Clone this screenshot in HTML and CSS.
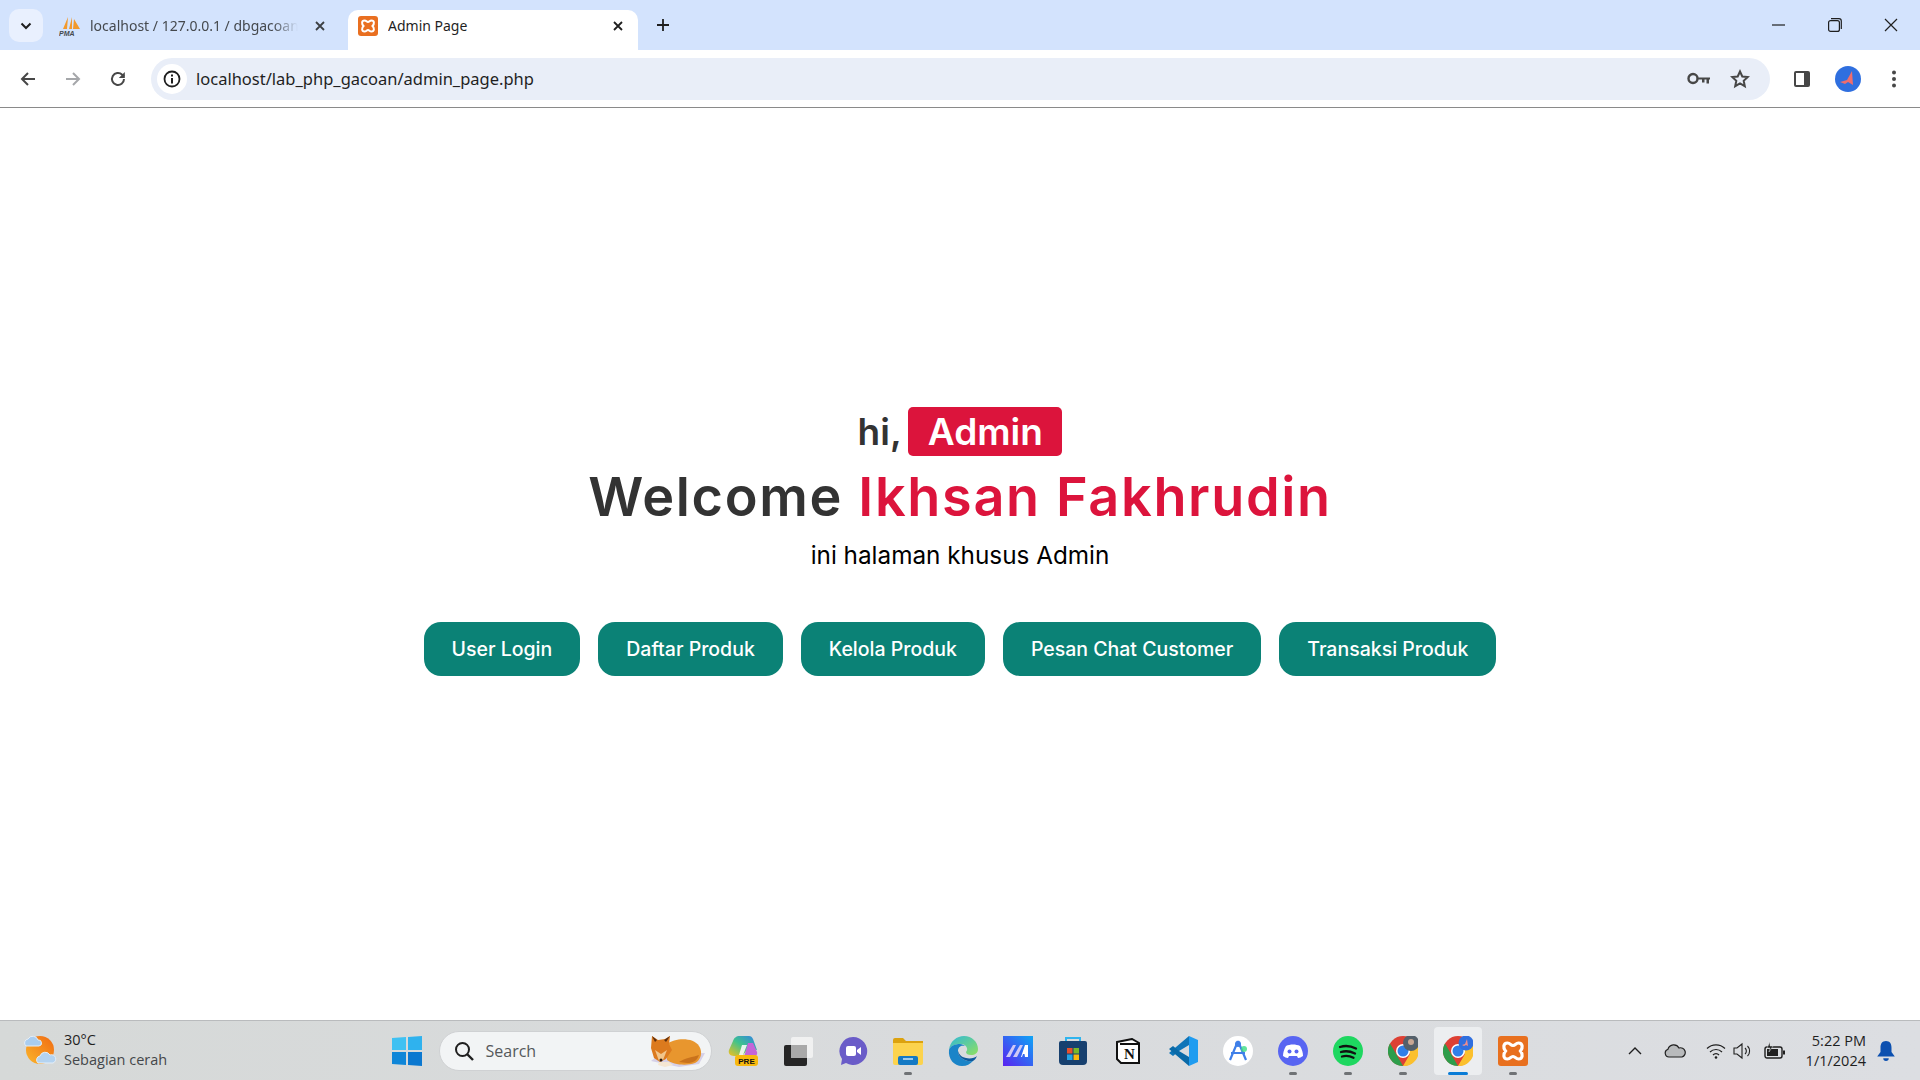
FILE: index.html
```html
<!DOCTYPE html>
<html lang="en">
<head>
    <meta charset="UTF-8">
    <title>Admin Page</title>
    <link rel="stylesheet" href="styles.css">
</head>
<body>

    <div class="tabstrip">
        <div class="tab-search"><svg width="12" height="8" viewBox="0 0 12 8"><path d="M1.500 1.500 6 6l4.500-4.500" fill="none" stroke="#1f1f1f" stroke-width="2"/></svg></div>
        <div class="tab">
            <svg class="favicon" width="22" height="20" viewBox="0 0 22 20"><path d="M9 1 4 13h4zM13 1l-3 12h3zM15 3l-1 10h7z" fill="#f29a2e"/><text x="0" y="19.500" class="pma">PMA</text></svg>
            <span class="tab-title">localhost / 127.0.0.1 / dbgacoan</span>
            <svg class="tab-close" width="12" height="12" viewBox="0 0 12 12"><path d="M2 2l8 8M10 2l-8 8" stroke="#3c4043" stroke-width="1.800"/></svg>
        </div>
        <div class="tab active">
            <svg class="favicon" width="20" height="20" viewBox="0 0 20 20"><rect width="20" height="20" rx="3" fill="#e96f20"/><path d="M6.500 4.500c2 0 2 1.500 3.500 1.500s1.500-1.500 3.500-1.500c3 0 3 3.500 1 5.500 2 2 2 5.500-1 5.500-2 0-2-1.500-3.500-1.500S8.500 15.500 6.500 15.500c-3 0-3-3.500-1-5.500-2-2-2-5.500 1-5.500z" fill="none" stroke="#fff" stroke-width="2"/></svg>
            <span class="tab-title">Admin Page</span>
            <svg class="tab-close" width="12" height="12" viewBox="0 0 12 12"><path d="M2 2l8 8M10 2l-8 8" stroke="#1f1f1f" stroke-width="1.800"/></svg>
        </div>
        <svg class="new-tab" width="14" height="14" viewBox="0 0 14 14"><path d="M7 1v12M1 7h12" stroke="#1f1f1f" stroke-width="1.800"/></svg>
        <div class="window-controls">
            <svg width="14" height="14" viewBox="0 0 14 14"><path d="M0 7h13" stroke="#1f1f1f" stroke-width="1.200"/></svg>
            <svg width="14" height="14" viewBox="0 0 14 14"><rect x=".6" y="2.600" width="10.800" height="10.800" rx="2" fill="none" stroke="#1f1f1f" stroke-width="1.200"/><path d="M3 .7h8a2.300 2.300 0 0 1 2.300 2.300v8" fill="none" stroke="#1f1f1f" stroke-width="1.200"/></svg>
            <svg width="14" height="14" viewBox="0 0 14 14"><path d="M1 1l12 12M13 1 1 13" stroke="#1f1f1f" stroke-width="1.200"/></svg>
        </div>
    </div>

    <div class="toolbar">
        <svg class="nav" width="18" height="18" viewBox="0 0 18 18"><path d="M16 9H3M9 3 3 9l6 6" fill="none" stroke="#474747" stroke-width="2"/></svg>
        <svg class="nav" width="18" height="18" viewBox="0 0 18 18"><path d="M2 9h13M9 3l6 6-6 6" fill="none" stroke="#a5a7aa" stroke-width="2"/></svg>
        <svg class="nav" width="18" height="18" viewBox="0 0 18 18"><path d="M15 9a6 6 0 1 1-1.800-4.300L15 6.500" fill="none" stroke="#474747" stroke-width="2"/><path d="M15.800 2v6h-6z" fill="#474747"/></svg>
        <div class="omnibox">
            <span class="site-info"><svg width="18" height="18" viewBox="0 0 18 18"><circle cx="9" cy="9" r="7.500" fill="none" stroke="#1f1f1f" stroke-width="1.800"/><path d="M9 8v5.500M9 4.500v2" stroke="#1f1f1f" stroke-width="2"/></svg></span>
            <span class="url">localhost/lab_php_gacoan/admin_page.php</span>
            <svg class="omni-icon" width="24" height="14" viewBox="0 0 24 14"><circle cx="6" cy="6.500" r="4.500" fill="none" stroke="#474747" stroke-width="2.400"/><path d="M11 5.500h12v2h-1v4h-2.500v-4h-2v3H15v-3h-4z" fill="#474747"/></svg>
            <svg class="omni-icon" width="20" height="20" viewBox="0 0 20 20"><path d="M10 2.500l2.300 5 5.400.6-4 3.700 1.100 5.400L10 14.500l-4.800 2.700 1.100-5.400-4-3.700 5.400-.6z" fill="none" stroke="#474747" stroke-width="2"/></svg>
        </div>
        <svg class="tool-panel" width="18" height="18" viewBox="0 0 18 18"><rect x="1" y="1" width="16" height="16" rx="2" fill="#474747"/><rect x="3" y="3" width="8" height="12" fill="#fff"/></svg>
        <svg class="avatar" width="26" height="26" viewBox="0 0 26 26"><circle cx="13" cy="13" r="13" fill="#2f6fdf"/><path d="M5 16l7-2 5-9 1 14-5-3-3 2z" fill="#ef6d6d"/></svg>
        <svg class="menu" width="4" height="18" viewBox="0 0 4 18"><circle cx="2" cy="2.500" r="2" fill="#474747"/><circle cx="2" cy="9" r="2" fill="#474747"/><circle cx="2" cy="15.500" r="2" fill="#474747"/></svg>
    </div>

    <div class="page">
        <h3 class="hi">hi, <span class="badge">Admin</span></h3>
        <h1 class="welcome">Welcome <span class="red">Ikhsan Fakhrudin</span></h1>
        <p class="desc">ini halaman khusus Admin</p>
        <div class="links">
            <a class="btn" href="#">User Login</a>
            <a class="btn" href="#">Daftar Produk</a>
            <a class="btn" href="#">Kelola Produk</a>
            <a class="btn" href="#">Pesan Chat Customer</a>
            <a class="btn" href="#">Transaksi Produk</a>
        </div>
    </div>

    <div class="taskbar">
        <div class="weather">
            <svg width="34" height="34" viewBox="0 0 34 34"><defs><linearGradient id="sunGrad" x1="1" y1="0" x2="0" y2="1"><stop offset="0" stop-color="#f06a12"/><stop offset="1" stop-color="#fbb62c"/></linearGradient></defs><circle cx="17" cy="17" r="14" fill="url(#sunGrad)"/><path d="M3 13a4 4 0 0 1 2-7 5.500 5.500 0 0 1 10 1 3 3 0 0 1 1 6z" fill="#a9cdf0" stroke="#e4eef8"/><path d="M15 30a4 4 0 0 1 2-7 5.500 5.500 0 0 1 10-1 4 4 0 0 1 3 8z" fill="#b4d3f0" stroke="#e4eef8"/></svg>
            <div class="weather-text">
                <div>30°C</div>
                <div class="muted">Sebagian cerah</div>
            </div>
        </div>

        <div class="apps">
            <span class="slot"><svg width="30" height="30" viewBox="0 0 30 30"><path d="M0 2l14-1v13H0z" fill="#3fc1f2"/><path d="M16 1l14-1v14H16z" fill="#2fb2ee"/><path d="M0 16h14v13L0 28z" fill="#0f86d8"/><path d="M16 16h14v14l-14-1z" fill="#0b78d0"/></svg></span>
            <div class="search">
                <svg width="20" height="20" viewBox="0 0 20 20"><circle cx="8.500" cy="8.500" r="6.500" fill="none" stroke="#1f1f1f" stroke-width="2"/><path d="M13 13l6 6" stroke="#1f1f1f" stroke-width="2.400"/></svg>
                <span>Search</span>
                <svg class="fox" width="58" height="34" viewBox="0 0 58 34"><path d="M2 27l8-6 46-2-6 11-20 3z" fill="#d5d0e8"/><path d="M18 10c8-6 26-7 32 2 4 6 2 14-4 17-8 3-22 2-28-3z" fill="#e8962e"/><path d="M30 28c6-4 14-5 20-7-2 6-6 8-12 8z" fill="#c9721c"/><path d="M3 2l6 4 7-1 5-3-1 8 3 6-6 9-6 3-6-4-3-10z" fill="#dc7a1e"/><path d="M6 16l6 4 6-4-4 10-4 1z" fill="#f2c58a"/><path d="M3 2l3 6 2-2zM21 2l-4 6-2-2z" fill="#5a2e10"/><path d="M10 28h10l4 3-8 2-7-2z" fill="#f4e6d2"/><circle cx="12" cy="26" r="1.500" fill="#2a1a10"/></svg>
            </div>
            <span class="slot"><svg width="30" height="32" viewBox="0 0 30 32"><defs><linearGradient id="copGrad" x1="0" y1="1" x2="1" y2="0"><stop offset="0" stop-color="#f4c01c"/><stop offset=".5" stop-color="#3fc38c"/><stop offset="1" stop-color="#2f7fe8"/></linearGradient></defs><path d="M12 1h9c2 0 3 1 4 3l4 11-9-1-6 7H6c-4 0-6-3-5-6l4-9c1-3 3-5 7-5z" fill="url(#copGrad)"/><path d="M20 8h5l4 9c1 3-2 5-5 5h-8z" fill="#c565d8"/><path d="M14 10h5l-4 10h-4z" fill="#fff" opacity=".85"/><rect x="7" y="20" width="23" height="11" rx="3" fill="#f8b90f"/><text x="18.500" y="29" class="pre">PRE</text></svg></span>
            <span class="slot"><svg width="30" height="30" viewBox="0 0 30 30"><rect x="1" y="9" width="23" height="21" rx="2" fill="#262626"/><rect x="8" y="1" width="22" height="21" rx="2" fill="#f4f4f4" opacity=".85"/><rect x="8" y="9" width="16" height="13" fill="#a9a9a9"/></svg></span>
            <span class="slot"><svg width="30" height="30" viewBox="0 0 30 30"><path d="M15 1a14 14 0 1 1-7 26l-5 2 1-6A14 14 0 0 1 15 1z" fill="#6a5cc8"/><rect x="8" y="10" width="10" height="10" rx="2" fill="#fff"/><path d="M19 14l4-3v8l-4-3z" fill="#fff"/></svg></span>
            <span class="slot has-dot"><svg width="32" height="28" viewBox="0 0 32 28"><path d="M1 3a2 2 0 0 1 2-2h8l3 3h17v4H1z" fill="#dca20f"/><path d="M1 6h30v20a2 2 0 0 1-2 2H3a2 2 0 0 1-2-2z" fill="#fcd34d"/><rect x="6" y="19" width="20" height="9" rx="2" fill="#1479c4"/><path d="M11 22h10" stroke="#cde6f8" stroke-width="1.500"/></svg></span>
            <span class="slot"><svg width="30" height="30" viewBox="0 0 30 30"><defs><linearGradient id="edgeGrad" x1="0" y1="0" x2="1" y2="1"><stop offset="0" stop-color="#2fb8d8"/><stop offset="1" stop-color="#8fe060"/></linearGradient></defs><path d="M1 14C2 5 9 0 16 0c8 0 14 6 14 13 0 4-3 6-7 6-3 0-5-1-5-3 3-3 0-8-5-8C7 8 2 10 1 14z" fill="url(#edgeGrad)"/><path d="M1 14c1-4 6-6 11-6 2 0 4 1 5 2-3-1-7 0-7 5 0 6 6 11 15 10-3 3-6 5-11 5C6 30 0 23 1 14z" fill="#1a84c8"/><path d="M10 15c0 6 6 11 15 10 2-1 3-3 4-5-2 2-7 3-11 2-5-1-7-4-8-7z" fill="#0f5a9c"/></svg></span>
            <span class="slot"><svg width="30" height="30" viewBox="0 0 30 30"><defs><linearGradient id="maGrad" x1="0" y1="1" x2="1" y2="0"><stop offset="0" stop-color="#5a22f0"/><stop offset="1" stop-color="#0ea5f5"/></linearGradient></defs><rect width="30" height="30" fill="url(#maGrad)"/><path d="M3 21l7-12h3L7 21zM10 21l7-12h3l-6 12z" fill="#cfc8f6"/><path d="M18 21l4-12h3v12h-3l-.5-3H20l-1 3z" fill="#fff"/></svg></span>
            <span class="slot"><svg width="30" height="30" viewBox="0 0 30 30"><path d="M8 6V2h14v4" fill="none" stroke="#2fb4ee" stroke-width="2"/><path d="M1 7a2 2 0 0 1 2-2h24a2 2 0 0 1 2 2v18a4 4 0 0 1-4 4H5a4 4 0 0 1-4-4z" fill="#17406f"/><rect x="9" y="12" width="5.500" height="5.500" fill="#e9502c"/><rect x="15.500" y="12" width="5.500" height="5.500" fill="#78b82a"/><rect x="9" y="18.500" width="5.500" height="5.500" fill="#22a5e6"/><rect x="15.500" y="18.500" width="5.500" height="5.500" fill="#fbb80c"/></svg></span>
            <span class="slot"><svg width="24" height="26" viewBox="0 0 24 26"><path d="M1 4l15-3 7 4v20H5l-4-4z" fill="#fff" stroke="#111" stroke-width="2"/><path d="M5 5v1h17" fill="none" stroke="#111" stroke-width="2"/><text x="13.500" y="21" class="notion">N</text></svg></span>
            <span class="slot"><svg width="30" height="30" viewBox="0 0 30 30"><path d="M21 0l9 4v22l-9 4z" fill="#1f9cf0"/><path d="M21 0v9l-10 6-6 5-4-3z" fill="#0f75b8"/><path d="M21 30v-9L11 15l-6-5-4 3z" fill="#0a6aa8"/></svg></span>
            <span class="slot"><svg width="30" height="30" viewBox="0 0 30 30"><circle cx="15" cy="15" r="15" fill="#fff"/><path d="M15 5l8 19M15 5 7 24M8 17h14" fill="none" stroke="#3f7fe8" stroke-width="2.200"/><circle cx="15" cy="8" r="3" fill="#3f7fe8"/><circle cx="21" cy="13" r="3" fill="#3ddc84" opacity=".8"/></svg></span>
            <span class="slot has-dot"><svg width="30" height="30" viewBox="0 0 30 30"><circle cx="15" cy="15" r="15" fill="#5865f2"/><path d="M8 10c4-2 10-2 14 0 2 3 3 7 3 10-2 1-3 2-5 2l-1-2H11l-1 2c-2 0-3-1-5-2 0-3 1-7 3-10z" fill="#fff"/><circle cx="11.500" cy="15.500" r="2" fill="#5865f2"/><circle cx="18.500" cy="15.500" r="2" fill="#5865f2"/></svg></span>
            <span class="slot has-dot"><svg width="30" height="30" viewBox="0 0 30 30"><circle cx="15" cy="15" r="15" fill="#1ed760"/><path d="M7 11c6-2 11-1 16 1.500M8 16c5-1.500 9-1 14 1.500M9 20.500c4-1 8-.5 11.500 1.200" fill="none" stroke="#111" stroke-width="2.300" stroke-linecap="round"/></svg></span>
            <span class="slot has-dot"><svg width="30" height="30" viewBox="0 0 30 30"><circle cx="15" cy="15" r="15" fill="#dd4034"/><path d="M15 30A15 15 0 0 1 2 7.500l7 12z" fill="#2d9d4a"/><path d="M15 30l7-12-7-8h15a15 15 0 0 1-15 20z" fill="#fbc02d"/><circle cx="15" cy="15" r="7" fill="#fff"/><circle cx="15" cy="15" r="5.500" fill="#2f7fe8"/><circle cx="23" cy="7" r="8" fill="#54606a"/><circle cx="23" cy="6" r="3" fill="#c9a793"/></svg></span>
            <span class="slot active"><svg width="30" height="30" viewBox="0 0 30 30"><circle cx="15" cy="15" r="15" fill="#dd4034"/><path d="M15 30A15 15 0 0 1 2 7.500l7 12z" fill="#2d9d4a"/><path d="M15 30l7-12-7-8h15a15 15 0 0 1-15 20z" fill="#fbc02d"/><circle cx="15" cy="15" r="7" fill="#fff"/><circle cx="15" cy="15" r="5.500" fill="#2f7fe8"/><circle cx="23" cy="7" r="7.500" fill="#2f6fdf"/><path d="M19 9l3-1 2-5 1 7-2-1-2 1z" fill="#ef8d8d"/></svg></span>
            <span class="slot has-dot"><svg width="30" height="30" viewBox="0 0 30 30"><rect width="30" height="30" rx="3" fill="#e8701f"/><path d="M9.500 7c3 0 3 2.500 5.500 2.500S17.500 7 20.500 7c4.500 0 4.500 5 2 8 2.500 3 2.500 8-2 8-3 0-3-2.500-5.500-2.500S12.500 23 9.500 23c-4.500 0-4.500-5-2-8-2.500-3-2.500-8 2-8z" fill="none" stroke="#fff" stroke-width="3.200"/></svg></span>
        </div>

        <div class="tray">
            <svg class="tray-chevron" width="14" height="8" viewBox="0 0 14 8"><path d="M1 7l6-6 6 6" fill="none" stroke="#1f1f1f" stroke-width="1.400"/></svg>
            <svg class="tray-cloud" width="22" height="14" viewBox="0 0 22 14"><path d="M5 13a4 4 0 0 1-1-7.800A6 6 0 0 1 15 4a4.500 4.500 0 0 1 3 9z" fill="#b8babc" stroke="#1f1f1f" stroke-width="1.200"/></svg>
            <svg class="tray-wifi" width="20" height="16" viewBox="0 0 20 16"><path d="M1 5.500a13 13 0 0 1 18 0M4 9a8.500 8.500 0 0 1 12 0M7 12a4 4 0 0 1 6 0" fill="none" stroke="#1f1f1f" stroke-width="1.200"/><circle cx="10" cy="14.500" r="1.300" fill="#1f1f1f"/></svg>
            <svg class="tray-volume" width="20" height="18" viewBox="0 0 20 18"><path d="M1 6h3l5-4v14l-5-4H1zM12 6a4 4 0 0 1 0 6M14.500 4a7 7 0 0 1 0 10" fill="none" stroke="#1f1f1f" stroke-width="1.100"/></svg>
            <svg class="tray-battery" width="22" height="18" viewBox="0 0 22 18"><rect x="1" y="5" width="17" height="11" rx="2" fill="none" stroke="#1f1f1f" stroke-width="1.400"/><rect x="3" y="7" width="11" height="7" fill="#1f1f1f"/><rect x="19" y="8.500" width="2" height="4" fill="#1f1f1f"/><path d="M6 0 3 6h3L5 10l4-6H6z" fill="#1f1f1f" stroke="#d9dcdf" stroke-width=".5"/></svg>
            <div class="clock">
                <div>5:22 PM</div>
                <div>1/1/2024</div>
            </div>
            <svg class="bell" width="20" height="22" viewBox="0 0 18 20"><path d="M9 1c3.500 0 5 2.500 5 6v4l3 4H1l3-4V7c0-3.500 1.500-6 5-6z" fill="#0c50b0"/><path d="M6.500 16.500a2.500 2.500 0 0 0 5 0z" fill="#0c50b0"/></svg>
        </div>
    </div>

</body>
</html>
```

FILE: styles.css
```css
* {
    box-sizing: border-box;
}
html, body {
    height: 100%;
}
body {
    margin: 0;
    display: flex;
    flex-direction: column;
    overflow: hidden;
    background-color: white;
    font-family: "Open Sans", "Noto Sans", sans-serif;
}
svg {
    display: block;
    flex: none;
}

/* browser chrome */
.tabstrip {
    height: 50px;
    display: flex;
    align-items: flex-end;
    padding-left: 9px;
    background-color: #d3e3fd;
}
.tab-search {
    width: 34px;
    height: 33px;
    margin-bottom: 8px;
    margin-right: 6px;
    display: flex;
    align-items: center;
    justify-content: center;
    border-radius: 10px;
    background-color: #e9f0fe;
}
.tab {
    width: 290px;
    height: 40px;
    padding: 0 14px 9px 11px;
    display: flex;
    align-items: center;
    gap: 9px;
    border-radius: 10px 10px 0 0;
    font-family: "Noto Sans", sans-serif;
    font-size: 14px;
    color: #45494e;
}
.tab.active {
    margin-left: 5px;
    background-color: white;
    color: #1f1f1f;
    gap: 10px;
    padding-left: 10px;
}
.tab-title {
    flex: 1;
    height: 20px;
    line-height: 19px;
    white-space: nowrap;
    overflow: hidden;
}
.tab:not(.active) .tab-title {
    flex: none;
    width: 208px;
    margin-right: 7px;
    -webkit-mask-image: linear-gradient(to right, black 88%, transparent);
    mask-image: linear-gradient(to right, black 88%, transparent);
}
.tab:not(.active) {
    width: 294px;
    padding-left: 10px;
    padding-right: 16px;
}
.pma {
    font: italic bold 7px "Liberation Sans", sans-serif;
    fill: #45494e;
}
.new-tab {
    margin: 0 0 18px 18px;
}
.window-controls {
    margin-left: auto;
    margin-bottom: 18px;
    display: flex;
    gap: 42px;
    padding-right: 22px;
}
.toolbar {
    height: 58px;
    display: flex;
    align-items: center;
    padding: 0 21px 0 19px;
    border-bottom: 1px solid #8a8a8a;
    border-radius: 10px 10px 0 0;
    background-color: white;
}
.nav {
    margin-right: 27px;
}
.nav:nth-child(3) {
    margin-right: 24px;
}
.omnibox {
    width: 1619px;
    height: 42px;
    display: flex;
    align-items: center;
    padding: 0 20px 0 6px;
    border-radius: 21px;
    background-color: #e9eef8;
}
.site-info {
    width: 30px;
    height: 30px;
    display: flex;
    align-items: center;
    justify-content: center;
    border-radius: 50%;
    background-color: white;
}
.url {
    flex: 1;
    margin-left: 9px;
    font-family: "Noto Sans", sans-serif;
    font-size: 16.500px;
    color: #1f1f1f;
}
.omni-icon + .omni-icon {
    margin-left: 19px;
}
.tool-panel {
    margin-left: 23px;
}
.avatar {
    margin-left: 24px;
}
.menu {
    margin-left: 31px;
}

/* the page itself */
.page {
    flex: 1;
    padding-top: 299px;
    display: flex;
    flex-direction: column;
    align-items: center;
    font-family: Inter, sans-serif;
    color: #333;
}
.hi {
    margin: 0;
    font-size: 37px;
    font-weight: 600;
    line-height: 49px;
}
.badge {
    display: inline-block;
    padding: 0 19.500px;
    margin-left: -2px;
    border-radius: 5px;
    background-color: crimson;
    color: white;
}
.welcome {
    margin: 3px 0 0;
    font-size: 54px;
    font-weight: 600;
    line-height: 75px;
    letter-spacing: 1.650px;
}
.red {
    color: crimson;
}
.desc {
    margin: 3px 0 0;
    font-size: 24.300px;
    line-height: 36px;
    color: black;
}
.links {
    margin-top: 49px;
    display: flex;
    gap: 18px;
}
.btn {
    height: 54px;
    padding: 0 28px;
    display: flex;
    align-items: center;
    border-radius: 17px;
    background-color: #0b8276;
    color: white;
    font-size: 19.500px;
    font-weight: 500;
    text-decoration: none;
}

/* windows taskbar */
.taskbar {
    height: 60px;
    display: grid;
    grid-template-columns: 1fr auto 1fr;
    align-items: center;
    border-top: 1px solid #b9bbbd;
    background: linear-gradient(90deg, #d6d9d8, #d9dbdd 50%, #dcdee2);
    font-family: "Open Sans", sans-serif;
    font-size: 14.500px;
    color: #1f1f1f;
}
.weather {
    display: flex;
    align-items: center;
    gap: 7px;
    padding-left: 23px;
    padding-bottom: 2px;
    line-height: 20px;
}
.muted {
    color: #44474a;
}
.apps {
    display: flex;
    align-items: center;
}
.slot {
    position: relative;
    width: 55px;
    height: 48px;
    display: flex;
    align-items: center;
    justify-content: center;
    border-radius: 4px;
}
.has-dot::after, .slot.active::after {
    content: "";
    position: absolute;
    left: 50%;
    bottom: 0;
    width: 8px;
    height: 3px;
    margin-left: -4px;
    border-radius: 2px;
    background-color: #6f7275;
}
.slot.active {
    width: 48px;
    margin: 0 3.500px;
    background-color: #eceef0;
}
.slot.active::after {
    width: 20px;
    margin-left: -10px;
    background-color: #0a7cd6;
}
.search {
    width: 273px;
    height: 40px;
    margin: 0 4px 0 4px;
    padding: 0 4px 0 14px;
    display: flex;
    align-items: center;
    gap: 12px;
    border: 1px solid #cfd1d3;
    border-radius: 20px;
    background-color: #f2f4f5;
    font-size: 16px;
    color: #55585b;
}
.fox {
    margin-left: auto;
}
.pre {
    font: bold 8px "Liberation Sans", sans-serif;
    fill: #111;
    text-anchor: middle;
}
.notion {
    font: bold 15px "Liberation Serif", serif;
    fill: #111;
    text-anchor: middle;
}
.tray {
    display: flex;
    align-items: center;
    justify-content: flex-end;
    padding-right: 24px;
}
.tray-chevron {
    margin-right: 22px;
}
.tray-cloud {
    margin-right: 20px;
}
.tray-wifi {
    margin-right: 7px;
}
.tray-volume {
    margin-right: 11px;
}
.tray-battery {
    margin-right: 20px;
}
.clock {
    text-align: right;
    line-height: 20px;
    color: #1f1f1f;
}
.bell {
    margin-left: 10px;
}
```
